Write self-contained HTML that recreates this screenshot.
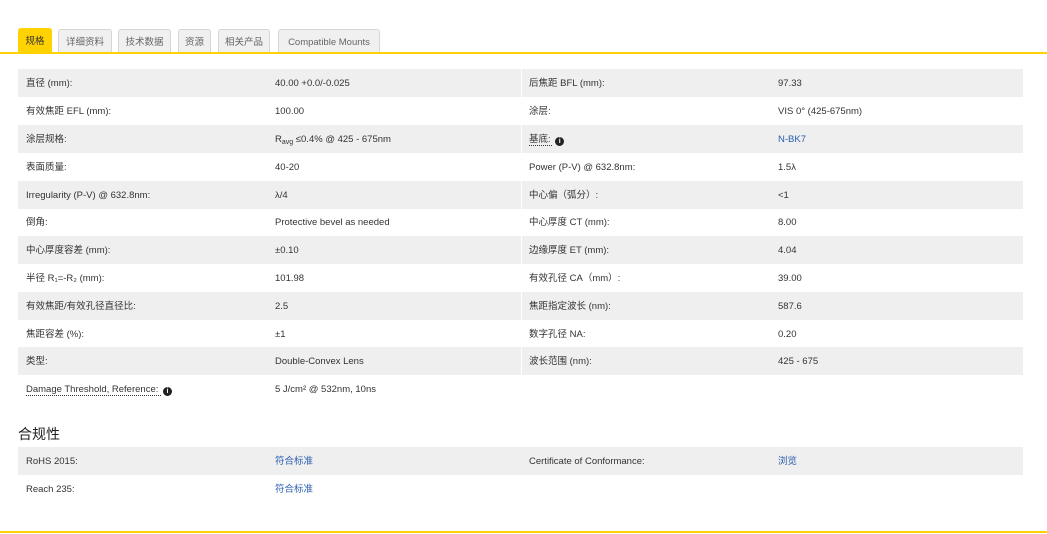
<!DOCTYPE html>
<html><head><meta charset="utf-8"><style>
*{margin:0;padding:0;box-sizing:border-box}
body{width:1047px;height:534px;background:#fff;font-family:"Liberation Sans","Noto Sans CJK SC",sans-serif;color:#333;font-size:9.5px;position:relative;overflow:hidden}
.tab{position:absolute;top:29px;height:23px;line-height:25px;text-align:center;background:#f0f0f0;border:1px solid #d6d6d6;border-bottom:none;border-radius:3px 3px 0 0;color:#666;font-size:9.5px}
.tab.on{background:#ffd200;border-color:#ffd200;color:#333;top:28px;height:24px}
.yl{position:absolute;left:0;width:1047px;height:2px;background:#ffd200}
.row{position:absolute;left:18px;width:1005px;height:28px}
.row.g{background:#efefef}
.row>span{position:absolute;top:9px;line-height:12px;white-space:nowrap}
.c1{left:8px}.c2{left:257px}.c3{left:511px}.c4{left:760px}
.dv{position:absolute;left:521px;top:69px;width:1px;height:306px;background:#fff}
a{color:#2a5db0;text-decoration:none}
.u{text-decoration:underline dotted #333;text-underline-offset:3px}
.i{display:inline-block;width:9px;height:9px;border-radius:50%;background:#222;color:#fff;font-size:7px;line-height:9px;text-align:center;font-weight:bold;vertical-align:-1px;margin-left:2px}
sub{font-size:7px;line-height:0;position:relative;top:2px;vertical-align:baseline}
h3{position:absolute;left:18px;top:424px;font-size:14px;font-weight:normal;color:#222}
</style></head><body>
<div class="tab on" style="left:18px;width:34px">规格</div>
<div class="tab" style="left:58px;width:54px">详细资料</div>
<div class="tab" style="left:118px;width:53px">技术数据</div>
<div class="tab" style="left:178px;width:33px">资源</div>
<div class="tab" style="left:218px;width:52px">相关产品</div>
<div class="tab" style="left:278px;width:102px">Compatible Mounts</div>
<div class="yl" style="top:52px"></div>

<div class="row g" style="top:69px"><span class="c1">直径 (mm):</span><span class="c2">40.00 +0.0/-0.025</span><span class="c3">后焦距 BFL (mm):</span><span class="c4">97.33</span></div>
<div class="row" style="top:97px"><span class="c1">有效焦距 EFL (mm):</span><span class="c2">100.00</span><span class="c3">涂层:</span><span class="c4">VIS 0° (425-675nm)</span></div>
<div class="row g" style="top:125px"><span class="c1">涂层规格:</span><span class="c2">R<sub>avg</sub> ≤0.4% @ 425 - 675nm</span><span class="c3"><span class="u">基底: <span class="i">i</span></span></span><span class="c4"><a>N-BK7</a></span></div>
<div class="row" style="top:153px"><span class="c1">表面质量:</span><span class="c2">40-20</span><span class="c3">Power (P-V) @ 632.8nm:</span><span class="c4">1.5λ</span></div>
<div class="row g" style="top:181px"><span class="c1">Irregularity (P-V) @ 632.8nm:</span><span class="c2">λ/4</span><span class="c3">中心偏（弧分）:</span><span class="c4">&lt;1</span></div>
<div class="row" style="top:208px"><span class="c1">倒角:</span><span class="c2">Protective bevel as needed</span><span class="c3">中心厚度 CT (mm):</span><span class="c4">8.00</span></div>
<div class="row g" style="top:236px"><span class="c1">中心厚度容差 (mm):</span><span class="c2">±0.10</span><span class="c3">边缘厚度 ET (mm):</span><span class="c4">4.04</span></div>
<div class="row" style="top:264px"><span class="c1">半径 R₁=-R₂ (mm):</span><span class="c2">101.98</span><span class="c3">有效孔径 CA（mm）:</span><span class="c4">39.00</span></div>
<div class="row g" style="top:292px"><span class="c1">有效焦距/有效孔径直径比:</span><span class="c2">2.5</span><span class="c3">焦距指定波长 (nm):</span><span class="c4">587.6</span></div>
<div class="row" style="top:320px"><span class="c1">焦距容差 (%):</span><span class="c2">±1</span><span class="c3">数字孔径 NA:</span><span class="c4">0.20</span></div>
<div class="row g" style="top:347px"><span class="c1">类型:</span><span class="c2">Double-Convex Lens</span><span class="c3">波长范围 (nm):</span><span class="c4">425 - 675</span></div>
<div class="row" style="top:375px"><span class="c1"><span class="u">Damage Threshold, Reference: <span class="i">i</span></span></span><span class="c2">5 J/cm² @ 532nm, 10ns</span></div>
<div class="dv"></div>

<h3>合规性</h3>
<div class="row g" style="top:447px"><span class="c1">RoHS 2015:</span><span class="c2"><a>符合标准</a></span><span class="c3">Certificate of Conformance:</span><span class="c4"><a>浏览</a></span></div>
<div class="row" style="top:475px"><span class="c1">Reach 235:</span><span class="c2"><a>符合标准</a></span></div>
<div class="yl" style="top:531px"></div>
</body></html>
